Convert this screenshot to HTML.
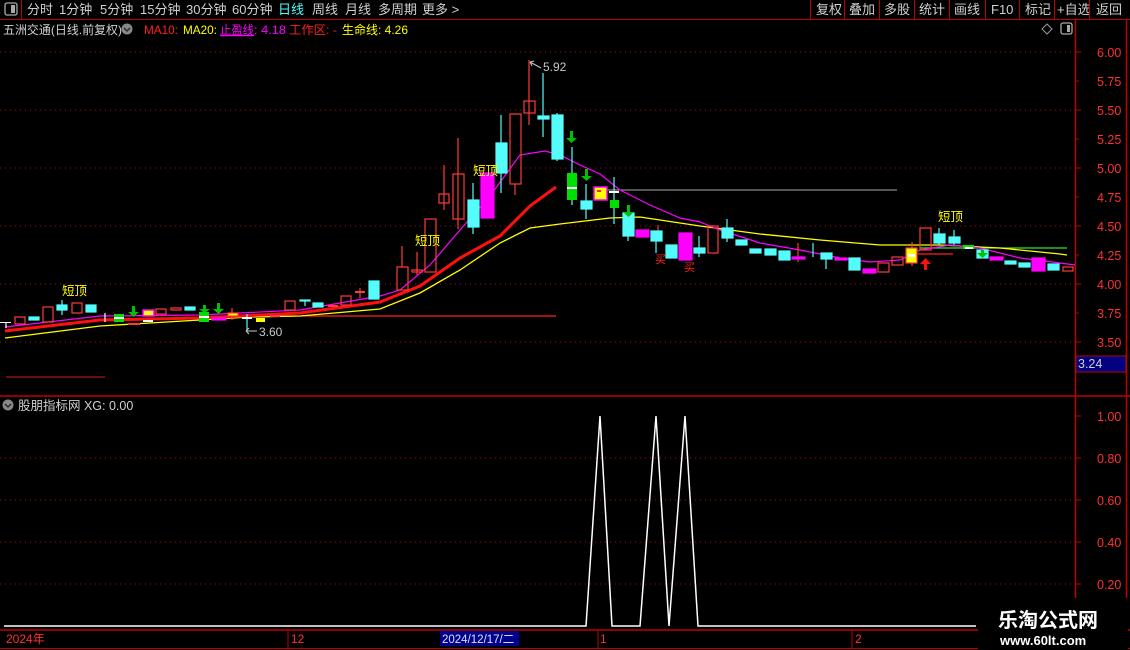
<!DOCTYPE html>
<html><head><meta charset="utf-8"><style>
html,body{margin:0;padding:0;background:#000;width:1130px;height:650px;overflow:hidden}
svg{display:block}
text{font-family:"Liberation Sans","Noto Sans CJK SC",sans-serif}
</style></head><body>
<svg width="1130" height="650" viewBox="0 0 1130 650" xmlns="http://www.w3.org/2000/svg">
<rect width="1130" height="650" fill="#000"/>
<!-- top toolbar -->
<line x1="0" y1="19.5" x2="1130" y2="19.5" stroke="#c00000"/>
<line x1="21.5" y1="0" x2="21.5" y2="19" stroke="#c00000"/>
<rect x="5" y="3" width="12" height="12" rx="2" fill="none" stroke="#aaa" stroke-width="1.3"/><rect x="11" y="5" width="4" height="8" fill="#aaa"/>
<g font-size="13" fill="#d0d0d0">
<text x="27" y="14">分时</text><text x="59" y="14">1分钟</text><text x="100" y="14">5分钟</text><text x="140" y="14">15分钟</text><text x="186" y="14">30分钟</text><text x="232" y="14">60分钟</text><text x="278" y="14" fill="#54fcfc">日线</text><text x="312" y="14">周线</text><text x="345" y="14">月线</text><text x="378" y="14">多周期</text><text x="422" y="14">更多 &gt;</text>
<text x="816" y="14">复权</text><text x="849" y="14">叠加</text><text x="884" y="14">多股</text><text x="919" y="14">统计</text><text x="954" y="14">画线</text><text x="991" y="14">F10</text><text x="1025" y="14">标记</text><text x="1057" y="14">+自选</text><text x="1096" y="14">返回</text>
</g>
<g stroke="#c00000"><line x1="810.5" y1="0" x2="810.5" y2="19"/><line x1="844.5" y1="0" x2="844.5" y2="19"/><line x1="879.5" y1="0" x2="879.5" y2="19"/><line x1="914.5" y1="0" x2="914.5" y2="19"/><line x1="949.5" y1="0" x2="949.5" y2="19"/><line x1="985.5" y1="0" x2="985.5" y2="19"/><line x1="1019.5" y1="0" x2="1019.5" y2="19"/><line x1="1054.5" y1="0" x2="1054.5" y2="19"/><line x1="1089.5" y1="0" x2="1089.5" y2="19"/></g>
<!-- info line -->
<g font-size="12">
<text x="3" y="34" fill="#d0d0d0" textLength="119" lengthAdjust="spacingAndGlyphs">五洲交通(日线.前复权)</text>
<circle cx="127" cy="29" r="5.5" fill="#888"/><path d="M124 28 L127 31 L130 28" stroke="#222" fill="none" stroke-width="1.3"/>
<text x="144" y="34" fill="#ff2020" textLength="34" lengthAdjust="spacingAndGlyphs">MA10:</text><text x="183" y="34" fill="#ffff00" textLength="34" lengthAdjust="spacingAndGlyphs">MA20:</text>
<text x="220" y="34" fill="#ff00ff" text-decoration="underline" textLength="34" lengthAdjust="spacingAndGlyphs">止盈线</text><text x="254" y="34" fill="#ff00ff" textLength="32" lengthAdjust="spacingAndGlyphs">: 4.18</text>
<text x="289" y="34" fill="#ff2020" textLength="48" lengthAdjust="spacingAndGlyphs">工作区: -</text><text x="342" y="34" fill="#ffff00" textLength="66" lengthAdjust="spacingAndGlyphs">生命线: 4.26</text>
</g>
<path d="M1047 24 L1052 29 L1047 34 L1042 29 Z" fill="none" stroke="#999"/>
<rect x="1061" y="23" width="11" height="11" rx="2" fill="none" stroke="#aaa" stroke-width="1.3"/><rect x="1067" y="25" width="3" height="7" fill="#aaa"/>
<!-- axes -->
<line x1="1075.5" y1="19" x2="1075.5" y2="630" stroke="#c00000" stroke-width="1.5"/>
<line x1="1126.5" y1="19" x2="1126.5" y2="630" stroke="#c00000" stroke-width="1.5"/>
<line x1="0" y1="396" x2="1130" y2="396" stroke="#c00000" stroke-width="1.5"/>
<g stroke="#c00000" stroke-dasharray="1,4">
<line x1="0" y1="52" x2="1075" y2="52"/><line x1="0" y1="110" x2="1075" y2="110"/><line x1="0" y1="168" x2="1075" y2="168"/><line x1="0" y1="226" x2="1075" y2="226"/><line x1="0" y1="284" x2="1075" y2="284"/><line x1="0" y1="342" x2="1075" y2="342"/>
<line x1="0" y1="458" x2="1075" y2="458"/><line x1="0" y1="500" x2="1075" y2="500"/><line x1="0" y1="542" x2="1075" y2="542"/><line x1="0" y1="584" x2="1075" y2="584"/>
</g>
<g stroke="#c00000"><line x1="1075" y1="52" x2="1081" y2="52"/><line x1="1075" y1="81" x2="1079" y2="81"/><line x1="1075" y1="110" x2="1081" y2="110"/><line x1="1075" y1="139" x2="1079" y2="139"/><line x1="1075" y1="168" x2="1081" y2="168"/><line x1="1075" y1="197" x2="1079" y2="197"/><line x1="1075" y1="226" x2="1081" y2="226"/><line x1="1075" y1="255" x2="1079" y2="255"/><line x1="1075" y1="284" x2="1081" y2="284"/><line x1="1075" y1="313" x2="1079" y2="313"/><line x1="1075" y1="342" x2="1081" y2="342"/>
<line x1="1075" y1="416" x2="1081" y2="416"/><line x1="1075" y1="458" x2="1081" y2="458"/><line x1="1075" y1="500" x2="1081" y2="500"/><line x1="1075" y1="542" x2="1081" y2="542"/><line x1="1075" y1="584" x2="1081" y2="584"/></g>
<g font-size="12.5" fill="#ff3030">
<text x="1097" y="57">6.00</text><text x="1097" y="86">5.75</text><text x="1097" y="115">5.50</text><text x="1097" y="144">5.25</text><text x="1097" y="173">5.00</text><text x="1097" y="202">4.75</text><text x="1097" y="231">4.50</text><text x="1097" y="260">4.25</text><text x="1097" y="289">4.00</text><text x="1097" y="318">3.75</text><text x="1097" y="347">3.50</text>
<text x="1097" y="421">1.00</text><text x="1097" y="463">0.80</text><text x="1097" y="505">0.60</text><text x="1097" y="547">0.40</text><text x="1097" y="589">0.20</text>
</g>
<rect x="1076" y="356" width="50" height="16" fill="#000080" stroke="#c00000"/>
<text x="1078" y="368" font-size="12.5" fill="#d0d0d0">3.24</text>
<line x1="6" y1="377" x2="105" y2="377" stroke="#d02020"/>
<!-- lines -->
<line x1="250" y1="316" x2="556" y2="316" stroke="#ff2020" stroke-width="1.3"/>
<line x1="600" y1="190" x2="897" y2="190" stroke="#aaaaaa"/>
<line x1="918" y1="254" x2="953" y2="254" stroke="#ff2020" stroke-width="1.3"/>
<line x1="920" y1="248" x2="1067" y2="248" stroke="#30e030" stroke-width="1.3"/>
<polyline fill="none" stroke="#ffff00" stroke-width="1.3" points="5,338 100,326 250,317 300,316 380,309 420,293 460,270 500,243 530,228 560,224 610,218 640,217 700,226 760,234 820,240 880,245 940,245 1000,248 1060,254 1067,255"/>
<polyline fill="none" stroke="#ff1010" stroke-width="3" points="5,331 100,320 200,318 300,313 380,302 420,286 460,258 500,236 530,206 556,187"/>
<polyline fill="none" stroke="#ff00ff" stroke-width="1.2" points="5,327 100,316 200,315 300,310 380,296 400,290 430,265 460,230 490,196 520,155 545,151 560,155 580,165 600,174 620,190 650,205 680,218 700,222 720,230 760,243 800,250 840,258 870,262 900,260 920,250 950,245 980,248 1020,258 1060,263 1075,265"/>
<!-- candles -->
<g stroke-width="1.2">
<g fill="none" stroke="#ff3b3b">
<rect x="15" y="317" width="10" height="7"/><rect x="43" y="307" width="10" height="15"/><rect x="72" y="303" width="10" height="10"/><rect x="156" y="309" width="10" height="5"/><rect x="171" y="308" width="10" height="2"/><rect x="285" y="301" width="10" height="9"/><rect x="341" y="296" width="10" height="9"/>
<rect x="397" y="267" width="11" height="23"/><line x1="402" y1="246" x2="402" y2="267"/>
<rect x="412" y="270" width="10" height="2"/><line x1="417" y1="252" x2="417" y2="275"/>
<rect x="425" y="219" width="11" height="53"/>
<rect x="439" y="194" width="10" height="9"/><line x1="444" y1="165" x2="444" y2="210"/>
<rect x="453" y="174" width="11" height="45"/><line x1="458" y1="138" x2="458" y2="229"/>
<rect x="510" y="114" width="11" height="70"/><line x1="515" y1="184" x2="515" y2="195"/>
<rect x="524" y="101" width="11" height="12"/><line x1="529" y1="60" x2="529" y2="125"/>
<rect x="708" y="226" width="10" height="27"/>
<rect x="878" y="263" width="11" height="9"/><rect x="892" y="257" width="11" height="8"/>
<rect x="920" y="228" width="11" height="22"/><rect x="1063" y="267" width="10" height="4"/>
<line x1="658" y1="225" x2="658" y2="236"/><line x1="798" y1="243" x2="798" y2="262"/><line x1="912" y1="242" x2="912" y2="266"/>
<line x1="232" y1="308" x2="232" y2="320"/><line x1="360" y1="288" x2="360" y2="298"/>
</g>
<g fill="#ff3b3b"><rect x="355" y="291" width="10" height="2"/><rect x="328" y="305" width="10" height="2"/><rect x="270" y="315" width="10" height="2"/><rect x="128" y="323" width="12" height="2"/></g>
<g fill="#54fcfc" stroke="#54fcfc">
<rect x="29" y="317" width="10" height="3"/><rect x="57" y="305" width="10" height="5"/><line x1="62" y1="300" x2="62" y2="315"/><rect x="86" y="305" width="10" height="7"/><rect x="185" y="307" width="10" height="3"/><rect x="313" y="303" width="10" height="4"/><rect x="300" y="300" width="10" height="1"/><line x1="305" y1="300" x2="305" y2="306"/>
<rect x="369" y="281" width="10" height="18"/>
<rect x="468" y="200" width="11" height="27"/><line x1="473" y1="183" x2="473" y2="234"/>
<rect x="496" y="143" width="11" height="30"/><line x1="501" y1="115" x2="501" y2="193"/>
<rect x="538" y="116" width="11" height="3"/><line x1="543" y1="73" x2="543" y2="137"/>
<rect x="552" y="115" width="11" height="44"/><line x1="557" y1="113" x2="557" y2="161"/>
<rect x="581" y="201" width="11" height="8"/><line x1="586" y1="184" x2="586" y2="219"/>
<line x1="572" y1="147" x2="572" y2="205"/><line x1="614" y1="177" x2="614" y2="224"/>
<rect x="623" y="213" width="11" height="23"/><line x1="628" y1="211" x2="628" y2="241"/>
<rect x="651" y="231" width="11" height="10"/><line x1="656" y1="241" x2="656" y2="253"/>
<rect x="666" y="245" width="11" height="13"/>
<rect x="694" y="248" width="11" height="5"/><line x1="699" y1="236" x2="699" y2="257"/>
<rect x="722" y="228" width="11" height="10"/><line x1="727" y1="219" x2="727" y2="242"/>
<rect x="736" y="240" width="11" height="5"/><rect x="750" y="249" width="11" height="4"/><rect x="765" y="249" width="11" height="6"/><rect x="779" y="251" width="11" height="9"/>
<line x1="813" y1="243" x2="813" y2="257"/>
<rect x="821" y="253" width="11" height="6"/><line x1="826" y1="253" x2="826" y2="269"/>
<rect x="849" y="258" width="11" height="12"/>
<rect x="934" y="234" width="11" height="9"/><line x1="939" y1="228" x2="939" y2="245"/>
<rect x="949" y="237" width="11" height="6"/><line x1="954" y1="230" x2="954" y2="245"/>
<rect x="977" y="250" width="11" height="8"/>
<rect x="1005" y="261" width="11" height="3"/><rect x="1019" y="263" width="11" height="4"/><rect x="1048" y="264" width="11" height="6"/>
<line x1="247" y1="314" x2="247" y2="330"/>
</g>
<g fill="#ff00ff" stroke="#ff00ff">
<rect x="481" y="173" width="13" height="45"/><rect x="636" y="230" width="13" height="7"/><rect x="679" y="233" width="13" height="27"/><rect x="792" y="257" width="13" height="2"/><rect x="835" y="258" width="12" height="2"/><rect x="863" y="269" width="13" height="4"/><rect x="990" y="257" width="13" height="3"/><rect x="1032" y="258" width="13" height="13"/><rect x="212" y="318" width="14" height="2"/>
</g>
<rect x="594" y="187" width="13" height="13" fill="#ffff00" stroke="#ff00ff" stroke-width="1.5"/><rect x="597" y="190" width="4" height="2" fill="#ff2020"/>
<rect x="143" y="310" width="11" height="6" fill="#ffff00" stroke="#ff00ff" stroke-width="1.5"/><rect x="143" y="320" width="10" height="2" fill="#fff"/>
<rect x="228" y="313" width="10" height="3" fill="#ffff00" stroke="#ff3b3b"/>
<rect x="256" y="318" width="9" height="4" fill="#ffff00"/>
<rect x="906" y="248" width="11" height="15" fill="#ffff00" stroke="#ff3b3b"/><rect x="908" y="254" width="7" height="3" fill="#fff"/>
<g fill="#00e000">
<rect x="567" y="173" width="10" height="27"/><rect x="610" y="200" width="9" height="8"/><rect x="114" y="314" width="10" height="8"/><rect x="199" y="312" width="10" height="10"/><rect x="963" y="245" width="11" height="4"/>
</g>
<g fill="#fff"><rect x="567" y="187" width="10" height="2"/><rect x="609" y="191" width="10" height="2"/><rect x="114" y="317" width="10" height="2"/><rect x="199" y="316" width="10" height="2"/><rect x="0" y="322" width="11" height="1"/><rect x="242" y="317" width="10" height="2"/><rect x="965" y="247" width="8" height="2"/></g>
<line x1="6" y1="322" x2="6" y2="328" stroke="#fff"/><line x1="105" y1="313" x2="105" y2="322" stroke="#fff"/>
</g>
<g fill="#00c000">
<path d="M570 131h3v7h4l-5.5 5l-5.5-5h4z"/><path d="M585 169h3v7h4l-5.5 5l-5.5-5h4z"/><path d="M627 205h3v7h4l-5.5 5l-5.5-5h4z"/><path d="M132 306h3v6h4l-5.5 5l-5.5-5h4z"/><path d="M217 303h3v6h4l-5.5 5l-5.5-5h4z"/><path d="M203 305h3v4h4l-5.5 4l-5.5-4h4z"/><path d="M981 250h3v3h4l-5.5 5l-5.5-5h4z"/>
</g>
<path d="M924 270h3v-6h4l-5.5-6l-5.5 6h4z" fill="#ff1010"/>
<g font-size="12.5" fill="#ffff00">
<text x="62" y="295">短顶</text><text x="415" y="245">短顶</text><text x="473" y="175">短顶</text><text x="938" y="221">短顶</text>
</g>
<g font-size="11" fill="#ff2020"><text x="655" y="263">买</text><text x="684" y="271">买</text></g>
<g font-size="12" fill="#c8c8c8"><text x="543" y="71">5.92</text><text x="259" y="336">3.60</text></g>
<path d="M530 62 L532 66 M530 62 L534 61 M530 62 L541 68" stroke="#c8c8c8" fill="none"/>
<path d="M246 331 L257 331 M246 331 L249 328 M246 331 L249 334" stroke="#c8c8c8" fill="none"/>
<!-- lower panel -->
<circle cx="8" cy="405" r="5.5" fill="#888"/><path d="M5 404 L8 407 L11 404" stroke="#222" fill="none" stroke-width="1.3"/>
<text x="18" y="410" font-size="12.5" fill="#d0d0d0">股朋指标网 XG: 0.00</text>
<polyline fill="none" stroke="#fff" stroke-width="1.5" points="4,626 586,626 600,416 612,626 640,626 656,416 669,626 685,416 698,626 976,626"/>
<line x1="0" y1="630" x2="1130" y2="630" stroke="#c00000" stroke-width="1.5"/>
<line x1="0" y1="648.5" x2="1130" y2="648.5" stroke="#c00000"/>
<g stroke="#c00000"><line x1="288" y1="630" x2="288" y2="648"/><line x1="598" y1="630" x2="598" y2="648"/><line x1="852" y1="630" x2="852" y2="648"/></g>
<g font-size="12" fill="#ff3030"><text x="6" y="643">2024年</text><text x="291" y="643">12</text><text x="600" y="643">1</text><text x="855" y="643">2</text></g>
<rect x="440" y="631" width="79" height="15" fill="#000090"/>
<text x="442" y="643" font-size="11.5" fill="#e0e0e0">2024/12/17/二</text>
<rect x="978" y="598" width="150" height="52" fill="#000"/>
<text x="998" y="627" font-size="20" font-weight="bold" fill="#fff" font-family="'Noto Sans CJK SC',sans-serif">乐淘公式网</text>
<text x="1000" y="645" font-size="13" font-weight="bold" fill="#fff" font-family="'Liberation Serif',serif">www.60lt.com</text>
</svg>
</body></html>
